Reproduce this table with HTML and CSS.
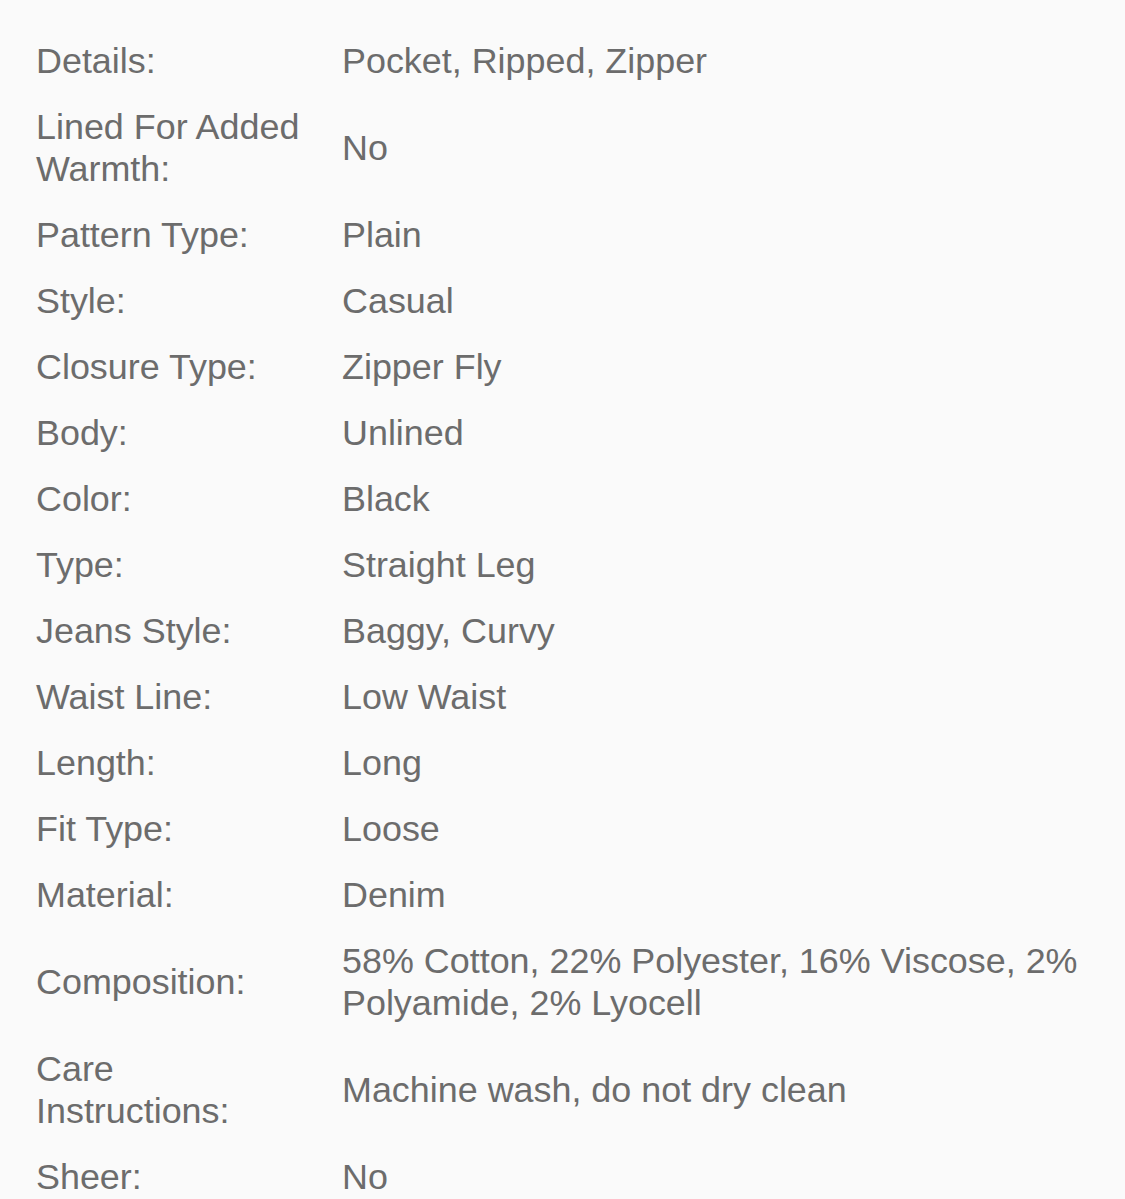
FILE: index.html
```html
<!DOCTYPE html>
<html>
<head>
<meta charset="utf-8">
<link rel="stylesheet" href="styles.css">
</head>
<body>
<div class="specs">
  <div class="row"><div class="label">Details:</div><div class="value">Pocket, Ripped, Zipper</div></div>
  <div class="row"><div class="label">Lined For Added Warmth:</div><div class="value">No</div></div>
  <div class="row"><div class="label">Pattern Type:</div><div class="value">Plain</div></div>
  <div class="row"><div class="label">Style:</div><div class="value">Casual</div></div>
  <div class="row"><div class="label">Closure Type:</div><div class="value">Zipper Fly</div></div>
  <div class="row"><div class="label">Body:</div><div class="value">Unlined</div></div>
  <div class="row"><div class="label">Color:</div><div class="value">Black</div></div>
  <div class="row"><div class="label">Type:</div><div class="value">Straight Leg</div></div>
  <div class="row"><div class="label">Jeans Style:</div><div class="value">Baggy, Curvy</div></div>
  <div class="row"><div class="label">Waist Line:</div><div class="value">Low Waist</div></div>
  <div class="row"><div class="label">Length:</div><div class="value">Long</div></div>
  <div class="row"><div class="label">Fit Type:</div><div class="value">Loose</div></div>
  <div class="row"><div class="label">Material:</div><div class="value">Denim</div></div>
  <div class="row"><div class="label">Composition:</div><div class="value">58% Cotton, 22% Polyester, 16% Viscose, 2% Polyamide, 2% Lyocell</div></div>
  <div class="row"><div class="label">Care Instructions:</div><div class="value">Machine wash, do not dry clean</div></div>
  <div class="row"><div class="label">Sheer:</div><div class="value">No</div></div>
</div>
</body>
</html>
```
FILE: styles.css
```css
html, body {
  margin: 0;
  padding: 0;
  background: #fafafa;
}
body {
  font-family: "Liberation Sans", Arial, sans-serif;
  color: #6c6c6c;
  font-size: 35.9px;
  line-height: 42px;
}
.specs {
  padding: 28px 30px 0 36px;
}
.row {
  display: grid;
  grid-template-columns: 306px 1fr;
  align-items: center;
  padding: 12px 0;
}
.label {
  padding-right: 36px;
}
```
